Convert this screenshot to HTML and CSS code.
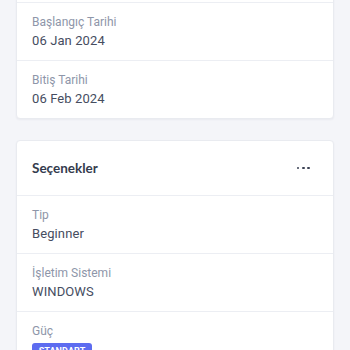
FILE: index.html
```html
<!DOCTYPE html>
<html>
<head>
<meta charset="utf-8">
<link rel="stylesheet" href="styles.css">
</head>
<body>
<div class="page">
  <div class="card card-top">
    <div class="row">
      <div class="label">Başlangıç Tarihi</div>
      <div class="value">06 Jan 2024</div>
    </div>
    <div class="row">
      <div class="label">Bitiş Tarihi</div>
      <div class="value">06 Feb 2024</div>
    </div>
  </div>
  <div class="card">
    <div class="card-header">
      <div class="title">Seçenekler</div>
      <div class="dots"><span></span><span></span><span></span></div>
    </div>
    <div class="row">
      <div class="label">Tip</div>
      <div class="value">Beginner</div>
    </div>
    <div class="row">
      <div class="label">İşletim Sistemi</div>
      <div class="value">WINDOWS</div>
    </div>
    <div class="row">
      <div class="label">Güç</div>
      <div class="value"><span class="badge">STANDART</span></div>
    </div>
  </div>
</div>
</body>
</html>
```
FILE: styles.css
```css
html, body {
  margin: 0;
  padding: 0;
  background: #f4f5f9;
  font-family: Roboto, "Liberation Sans", sans-serif;
  height: 350px;
  overflow: hidden;
}
.page {
  padding: 0 16px;
}
.card {
  background: #ffffff;
  border: 1px solid #e9ebf0;
  border-radius: 4px;
  box-shadow: 0 1px 2px rgba(30, 40, 70, 0.05);
}
.card-top {
  margin-top: -12px;
  padding-top: 13px;
  border-top-left-radius: 0;
  border-top-right-radius: 0;
}
.card + .card {
  margin-top: 21px;
}
.row {
  border-top: 1px solid #eceef3;
  padding: 11px 15px 9px;
}
.card-header {
  height: 55px;
  box-sizing: border-box;
  border-bottom: 1px solid #eceef3;
  padding: 0 23px 0 15px;
  display: flex;
  align-items: center;
  justify-content: space-between;
}
.card-header + .row {
  border-top: none;
}
.title {
  font-size: 13.5px;
  color: #343b4d;
  font-family: Lato, Roboto, sans-serif;
  font-weight: 700;
}
.dots {
  display: flex;
  gap: 2.6px;
}
.dots span {
  width: 2.7px;
  height: 2.7px;
  border-radius: 50%;
  background: #3b4254;
}
.label {
  font-size: 12px;
  line-height: 17px;
  color: #8e96a9;
}
.value {
  font-size: 13px;
  line-height: 20px;
  color: #464d5f;
  letter-spacing: 0.1px;
}
.badge {
  display: inline-block;
  margin-top: 3px;
  width: 60px;
  height: 16px;
  background: #5d6cf0;
  border-radius: 3px;
  color: #fff;
  font-size: 9px;
  font-weight: 700;
  line-height: 16px;
  text-align: center;
  vertical-align: top;
}
```
